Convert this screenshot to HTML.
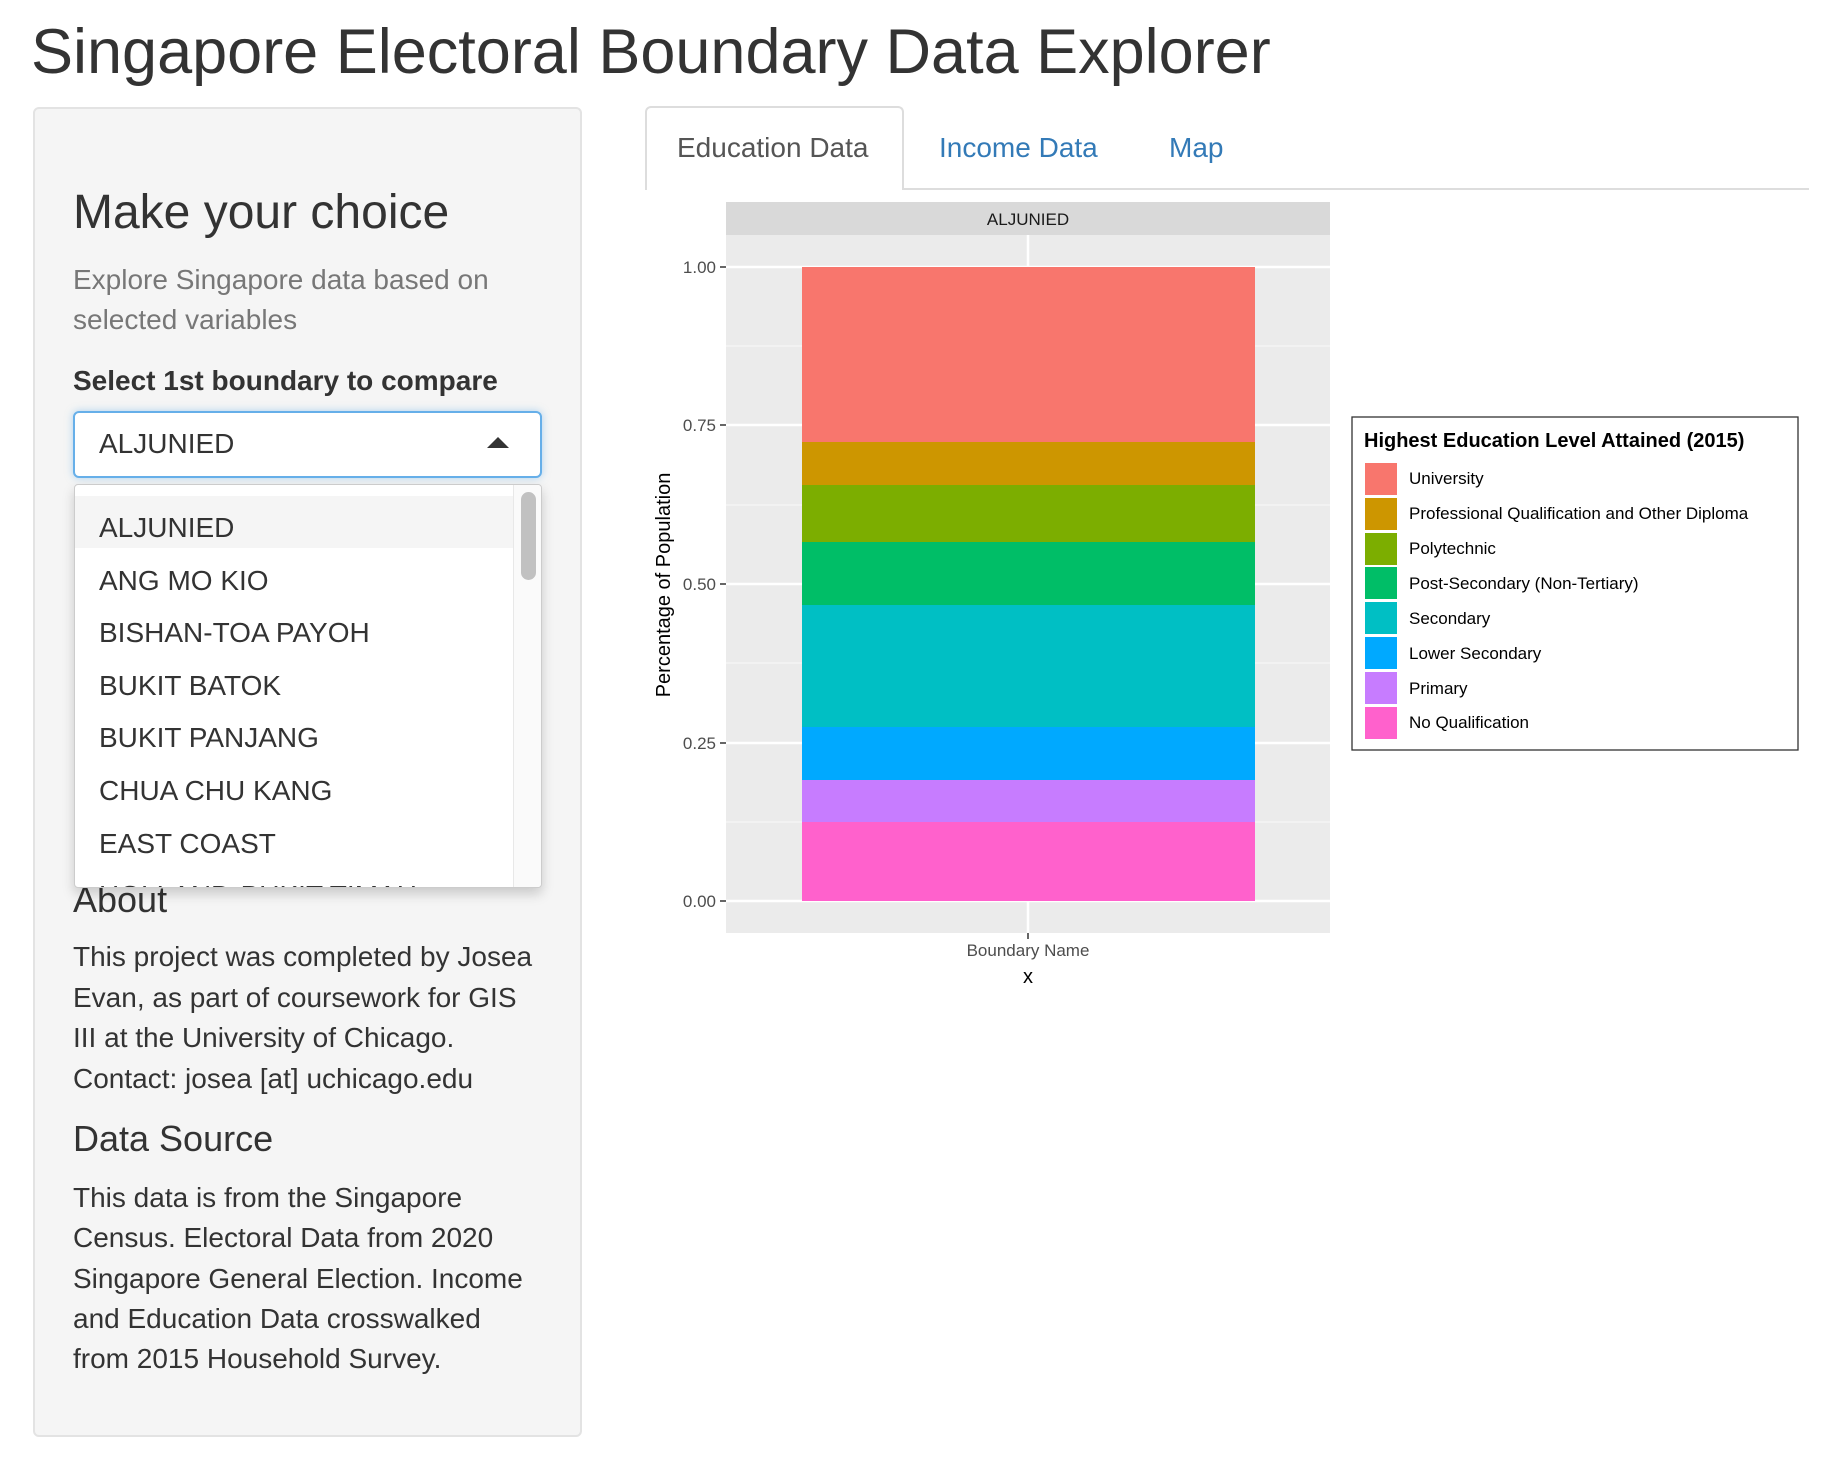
<!DOCTYPE html>
<html><head><meta charset="utf-8"><style>
*{box-sizing:border-box;margin:0;padding:0}
body{width:1842px;height:1470px;background:#fff;font-family:"Liberation Sans",Helvetica,Arial,sans-serif;color:#333;position:relative;overflow:hidden}
.a{position:absolute;white-space:nowrap}
</style></head><body>
<div class="a" style="left:31px;top:17px;font-size:63px;line-height:70px;">Singapore Electoral Boundary Data Explorer</div>

<div class="a" style="left:33px;top:107px;width:549px;height:1330px;background:#f5f5f5;border:2px solid #e3e3e3;border-radius:6px"></div>
<div class="a" style="left:73px;top:184px;font-size:48px;line-height:58px;font-weight:500">Make your choice</div>
<div class="a" style="left:73px;top:260px;font-size:28px;line-height:40px;color:#777">Explore Singapore data based on<br>selected variables</div>
<div class="a" style="left:73px;top:361px;font-size:28px;line-height:40px;font-weight:bold">Select 1st boundary to compare</div>
<div class="a" style="left:73px;top:411px;width:469px;height:67px;background:#fff;border:2px solid #66afe9;border-radius:6px;box-shadow:0 0 8px rgba(102,175,233,.5)"></div>
<div class="a" style="left:99px;top:424px;font-size:28px;line-height:40px">ALJUNIED</div>
<div class="a" style="left:487px;top:437px;width:0;height:0;border-left:11px solid transparent;border-right:11px solid transparent;border-bottom:11px solid #333"></div>

<div class="a" style="left:73px;top:880px;font-size:36px;line-height:40px;font-weight:500">About</div>
<div class="a" style="left:73px;top:937px;font-size:28px;line-height:40.5px">This project was completed by Josea<br>Evan, as part of coursework for GIS<br>III at the University of Chicago.<br>Contact: josea [at] uchicago.edu</div>
<div class="a" style="left:73px;top:1117px;font-size:36px;line-height:44px;font-weight:500">Data Source</div>
<div class="a" style="left:73px;top:1178px;font-size:28px;line-height:40.3px">This data is from the Singapore<br>Census. Electoral Data from 2020<br>Singapore General Election. Income<br>and Education Data crosswalked<br>from 2015 Household Survey.</div>

<div class="a" style="left:74px;top:484px;width:468px;height:404px;background:#fff;border:1px solid #ccc;border-radius:4px;box-shadow:0 6px 12px rgba(0,0,0,.18);overflow:hidden">
 <div style="position:absolute;left:0;top:11px;width:438px;height:52px;background:#f5f5f5"></div>
 <div style="position:absolute;left:24px;top:17px;font-size:28px;line-height:52.6px;white-space:nowrap">ALJUNIED<br>ANG MO KIO<br>BISHAN-TOA PAYOH<br>BUKIT BATOK<br>BUKIT PANJANG<br>CHUA CHU KANG<br>EAST COAST<br>HOLLAND-BUKIT TIMAH</div>
 <div style="position:absolute;left:438px;top:0;width:30px;height:404px;background:#fafafa;border-left:1px solid #e8e8e8"></div>
 <div style="position:absolute;left:446px;top:7px;width:15px;height:88px;background:#c1c1c1;border-radius:8px"></div>
</div>

<div class="a" style="left:645px;top:188px;width:1164px;height:2px;background:#ddd"></div>
<div class="a" style="left:645px;top:106px;width:259px;height:84px;background:#fff;border:2px solid #ddd;border-bottom:none;border-radius:6px 6px 0 0"></div>
<div class="a" style="left:677px;top:128px;font-size:28px;line-height:40px;color:#555">Education Data</div>
<div class="a" style="left:939px;top:128px;font-size:28px;line-height:40px;color:#337ab7">Income Data</div>
<div class="a" style="left:1169px;top:128px;font-size:28px;line-height:40px;color:#337ab7">Map</div>

<svg class="a" style="left:0;top:0" width="1842" height="1470">
 <rect x="726" y="202" width="604" height="33" fill="#d9d9d9"/>
 <text x="1028" y="225" font-size="17" text-anchor="middle" fill="#1a1a1a" font-family="Liberation Sans">ALJUNIED</text>
 <rect x="726" y="235" width="604" height="698" fill="#ebebeb"/>
 <g stroke="#f5f5f5" stroke-width="1.3">
  <line x1="726" x2="1330" y1="346" y2="346"/><line x1="726" x2="1330" y1="505" y2="505"/><line x1="726" x2="1330" y1="663" y2="663"/><line x1="726" x2="1330" y1="822" y2="822"/>
 </g>
 <g stroke="#fff" stroke-width="2.5">
  <line x1="726" x2="1330" y1="267" y2="267"/><line x1="726" x2="1330" y1="425" y2="425"/><line x1="726" x2="1330" y1="584" y2="584"/><line x1="726" x2="1330" y1="743" y2="743"/><line x1="726" x2="1330" y1="901" y2="901"/>
  <line x1="1028" x2="1028" y1="235" y2="933"/>
 </g>
 <rect x="802" y="267" width="453" height="175" fill="#F8766D"/>
 <rect x="802" y="442" width="453" height="43" fill="#CD9600"/>
 <rect x="802" y="485" width="453" height="57" fill="#7CAE00"/>
 <rect x="802" y="542" width="453" height="63" fill="#00BE67"/>
 <rect x="802" y="605" width="453" height="122" fill="#00BFC4"/>
 <rect x="802" y="727" width="453" height="53" fill="#00A9FF"/>
 <rect x="802" y="780" width="453" height="42" fill="#C77CFF"/>
 <rect x="802" y="822" width="453" height="79" fill="#FF61CC"/>
 <g stroke="#333" stroke-width="1.5">
  <line x1="720" x2="726" y1="267" y2="267"/><line x1="720" x2="726" y1="425" y2="425"/><line x1="720" x2="726" y1="584" y2="584"/><line x1="720" x2="726" y1="743" y2="743"/><line x1="720" x2="726" y1="901" y2="901"/>
  <line x1="1028" x2="1028" y1="933" y2="939"/>
 </g>
 <g font-size="17" fill="#4d4d4d" text-anchor="end" font-family="Liberation Sans">
  <text x="716" y="273">1.00</text><text x="716" y="431">0.75</text><text x="716" y="590">0.50</text><text x="716" y="749">0.25</text><text x="716" y="907">0.00</text>
 </g>
 <text transform="translate(670,585) rotate(-90)" font-size="20" text-anchor="middle" fill="#000" font-family="Liberation Sans">Percentage of Population</text>
 <text x="1028" y="956" font-size="17" text-anchor="middle" fill="#4d4d4d" font-family="Liberation Sans">Boundary Name</text>
 <text x="1028" y="983" font-size="20" text-anchor="middle" fill="#000" font-family="Liberation Sans">x</text>

 <rect x="1352" y="417" width="446" height="333" fill="#fff" stroke="#333" stroke-width="1.3"/>
 <text x="1364" y="447" font-size="20" font-weight="bold" fill="#000" font-family="Liberation Sans">Highest Education Level Attained (2015)</text>
 <g font-size="17" fill="#000" font-family="Liberation Sans">
  <rect x="1365" y="463" width="32" height="32" fill="#F8766D"/><text x="1409" y="484">University</text>
  <rect x="1365" y="498" width="32" height="32" fill="#CD9600"/><text x="1409" y="519">Professional Qualification and Other Diploma</text>
  <rect x="1365" y="533" width="32" height="32" fill="#7CAE00"/><text x="1409" y="554">Polytechnic</text>
  <rect x="1365" y="567" width="32" height="32" fill="#00BE67"/><text x="1409" y="589">Post-Secondary (Non-Tertiary)</text>
  <rect x="1365" y="602" width="32" height="32" fill="#00BFC4"/><text x="1409" y="624">Secondary</text>
  <rect x="1365" y="637" width="32" height="32" fill="#00A9FF"/><text x="1409" y="659">Lower Secondary</text>
  <rect x="1365" y="672" width="32" height="32" fill="#C77CFF"/><text x="1409" y="694">Primary</text>
  <rect x="1365" y="707" width="32" height="32" fill="#FF61CC"/><text x="1409" y="728">No Qualification</text>
 </g>
</svg>
</body></html>
